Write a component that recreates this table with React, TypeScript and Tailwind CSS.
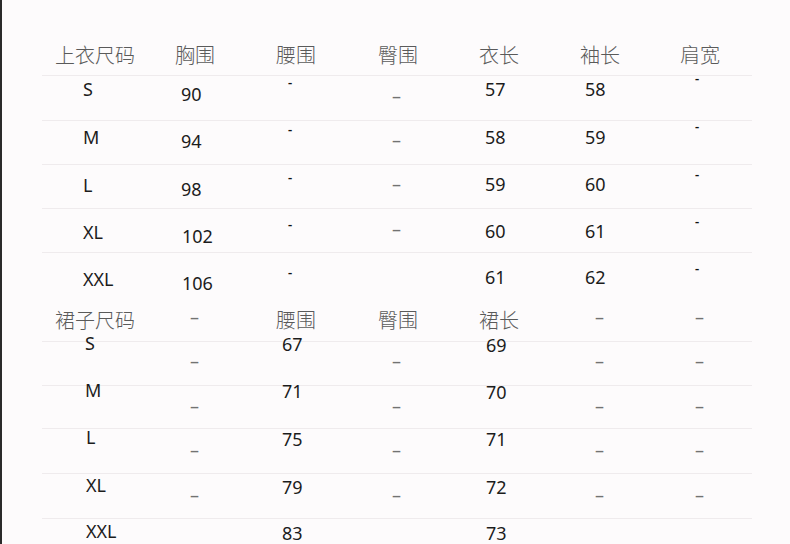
/**
 * Size chart: tops (上衣尺码) and skirts (裙子尺码), laid out as a
 * flat table with thin row rules, like the product-detail image.
 */

type Kind = 'head' | 'num' | 'dash' | 'tick'
type Cell = { t: string; k: Kind; cls: string } | null
type Row = { h: string; line: boolean; cells: Cell[] }

const COLS = [
  'w-[120px]',
  'w-[101px]',
  'w-[102px]',
  'w-[101px]',
  'w-[101px]',
  'w-[100px]',
  'w-[72px]',
]

const KIND_CLS: Record<Kind, string> = {
  head: "font-['Noto_Sans_CJK_SC',sans-serif] font-light text-[20px] leading-[20px] text-[#5a5a5a]",
  num: "font-['Noto_Sans',sans-serif] text-[18px] leading-[18px] text-[#1c1c1c]",
  dash: "font-['Noto_Sans',sans-serif] text-[18px] leading-[18px] text-[#727272]",
  tick: "font-['Noto_Sans',sans-serif] font-semibold text-[13px] leading-[13px] text-[#111]",
}

const h = (t: string, cls = 'mt-[9px]'): Cell => ({ t, k: 'head', cls })
const n = (t: string, cls: string): Cell => ({ t, k: 'num', cls })
const d = (cls: string): Cell => ({ t: '–', k: 'dash', cls })
const tk = (cls: string): Cell => ({ t: '-', k: 'tick', cls })

const ROWS: Row[] = [
  {
    h: 'h-[40px]',
    line: true,
    cells: [h('上衣尺码'), h('胸围'), h('腰围'), h('臀围'), h('衣长'), h('袖长'), h('肩宽')],
  },
  {
    h: 'h-[45px]',
    line: true,
    cells: [
      n('S', 'ml-[28px] mt-[4px]'),
      n('90', 'ml-[6px] mt-[9px]'),
      tk('ml-[12px] mt-[0px]'),
      d('ml-[14px] mt-[11px]'),
      n('57', 'ml-[6px] mt-[4px]'),
      n('58', 'ml-[5px] mt-[4px]'),
      tk('ml-[15px] -mt-[4px]'),
    ],
  },
  {
    h: 'h-[44px]',
    line: true,
    cells: [
      n('M', 'ml-[28px] mt-[7px]'),
      n('94', 'ml-[6px] mt-[11px]'),
      tk('ml-[12px] mt-[2px]'),
      d('ml-[14px] mt-[10px]'),
      n('58', 'ml-[6px] mt-[7px]'),
      n('59', 'ml-[5px] mt-[7px]'),
      tk('ml-[15px] -mt-[1px]'),
    ],
  },
  {
    h: 'h-[44px]',
    line: true,
    cells: [
      n('L', 'ml-[28px] mt-[11px]'),
      n('98', 'ml-[6px] mt-[15px]'),
      tk('ml-[12px] mt-[6px]'),
      d('ml-[14px] mt-[10px]'),
      n('59', 'ml-[6px] mt-[10px]'),
      n('60', 'ml-[5px] mt-[10px]'),
      tk('ml-[15px] mt-[3px]'),
    ],
  },
  {
    h: 'h-[44px]',
    line: true,
    cells: [
      n('XL', 'ml-[28px] mt-[14px]'),
      n('102', 'ml-[7px] mt-[18px]'),
      tk('ml-[12px] mt-[9px]'),
      d('ml-[14px] mt-[11px]'),
      n('60', 'ml-[6px] mt-[13px]'),
      n('61', 'ml-[5px] mt-[13px]'),
      tk('ml-[15px] mt-[6px]'),
    ],
  },
  {
    h: 'h-[48px]',
    line: false,
    cells: [
      n('XXL', 'ml-[28px] mt-[17px]'),
      n('106', 'ml-[7px] mt-[21px]'),
      tk('ml-[12px] mt-[13px]'),
      null,
      n('61', 'ml-[6px] mt-[15px]'),
      n('62', 'ml-[5px] mt-[15px]'),
      tk('ml-[15px] mt-[9px]'),
    ],
  },
  {
    h: 'h-[41px]',
    line: true,
    cells: [
      h('裙子尺码', 'mt-[9px]'),
      d('ml-[15px] mt-[7px]'),
      h('腰围', 'mt-[9px]'),
      h('臀围', 'mt-[9px]'),
      h('裙长', 'mt-[9px]'),
      d('ml-[15px] mt-[7px]'),
      d('ml-[15px] mt-[7px]'),
    ],
  },
  {
    h: 'h-[44px]',
    line: true,
    cells: [
      n('S', 'ml-[30px] -mt-[8px]'),
      d('ml-[15px] mt-[10px]'),
      n('67', 'ml-[6px] -mt-[7px]'),
      d('ml-[14px] mt-[10px]'),
      n('69', 'ml-[7px] -mt-[6px]'),
      d('ml-[15px] mt-[10px]'),
      d('ml-[15px] mt-[10px]'),
    ],
  },
  {
    h: 'h-[43px]',
    line: true,
    cells: [
      n('M', 'ml-[30px] -mt-[5px]'),
      d('ml-[15px] mt-[11px]'),
      n('71', 'ml-[6px] -mt-[4px]'),
      d('ml-[14px] mt-[11px]'),
      n('70', 'ml-[7px] -mt-[3px]'),
      d('ml-[15px] mt-[11px]'),
      d('ml-[15px] mt-[11px]'),
    ],
  },
  {
    h: 'h-[45px]',
    line: true,
    cells: [
      n('L', 'ml-[31px] -mt-[1px]'),
      d('ml-[15px] mt-[12px]'),
      n('75', 'ml-[6px] mt-[1px]'),
      d('ml-[14px] mt-[12px]'),
      n('71', 'ml-[7px] mt-[1px]'),
      d('ml-[15px] mt-[12px]'),
      d('ml-[15px] mt-[12px]'),
    ],
  },
  {
    h: 'h-[45px]',
    line: true,
    cells: [
      n('XL', 'ml-[31px] mt-[2px]'),
      d('ml-[15px] mt-[12px]'),
      n('79', 'ml-[6px] mt-[4px]'),
      d('ml-[14px] mt-[12px]'),
      n('72', 'ml-[7px] mt-[4px]'),
      d('ml-[15px] mt-[12px]'),
      d('ml-[15px] mt-[12px]'),
    ],
  },
  {
    h: 'h-[30px]',
    line: false,
    cells: [
      n('XXL', 'ml-[31px] mt-[3px]'),
      null,
      n('83', 'ml-[6px] mt-[5px]'),
      null,
      n('73', 'ml-[7px] mt-[5px]'),
      null,
      null,
    ],
  },
]

function SizeRow({ row }: { row: Row }) {
  return (
    <div
      className={`flex items-start pl-[13px] ${row.h} ${
        row.line ? 'border-b border-[#efebed]' : ''
      }`}
    >
      {row.cells.map((c, i) => (
        <div key={i} className={`${COLS[i]} shrink-0`}>
          {c ? (
            <div className={`whitespace-nowrap ${KIND_CLS[c.k]} ${c.cls}`}>{c.t}</div>
          ) : null}
        </div>
      ))}
    </div>
  )
}

export default function App() {
  return (
    <div className="h-[544px] w-[790px] overflow-hidden border-l-2 border-[#2a2a2a] bg-[#fdfbfc]">
      <div className="ml-[40px] w-[710px] pt-[36px]">
        {ROWS.map((r, i) => (
          <SizeRow key={i} row={r} />
        ))}
      </div>
    </div>
  )
}
